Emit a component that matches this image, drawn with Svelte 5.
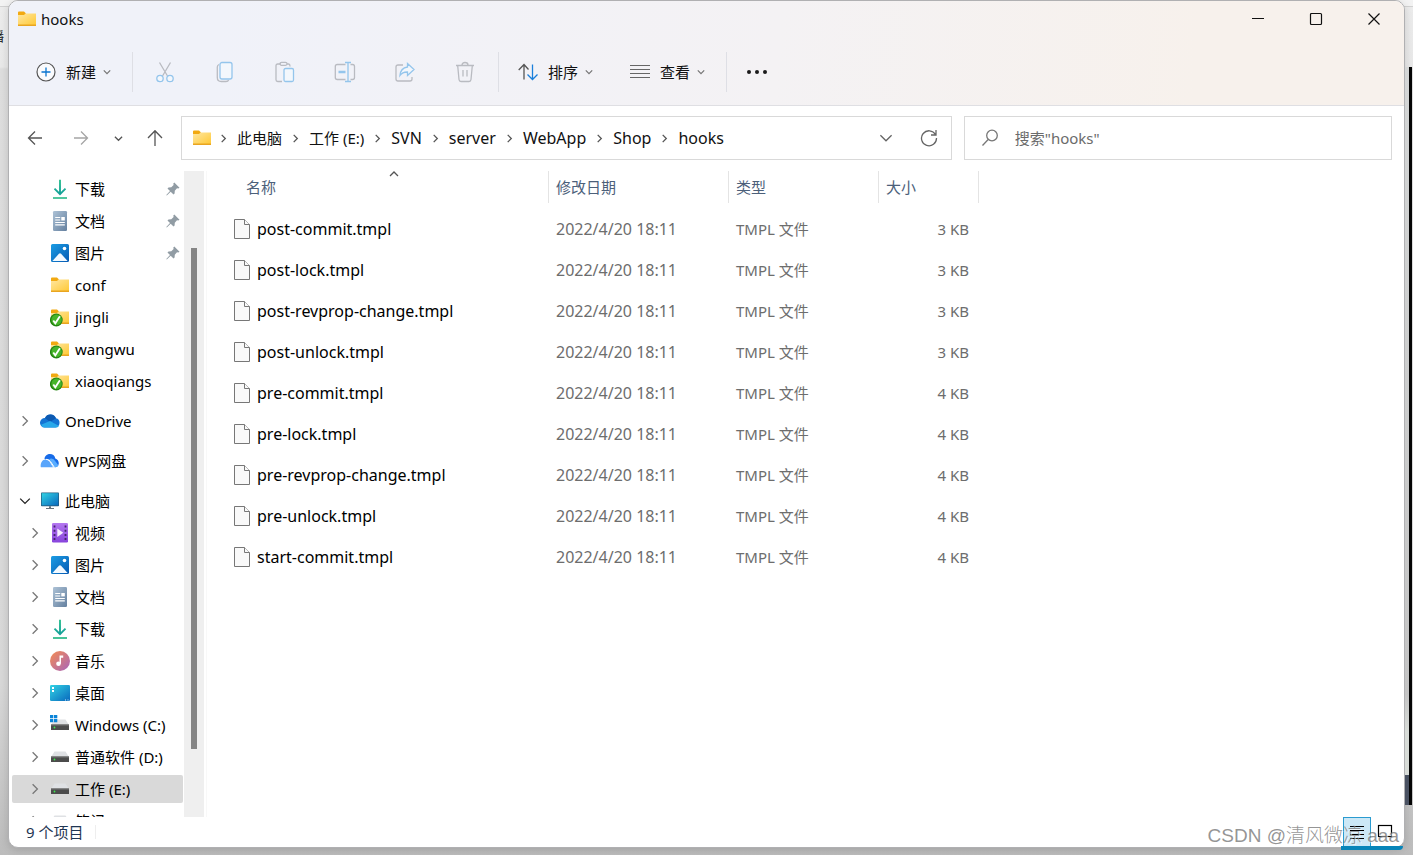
<script>
    const crumbs = [
        { text: "此电脑", cjk: true },
        { text: "工作 (E:)", cjk: true },
        { text: "SVN" },
        { text: "server" },
        { text: "WebApp" },
        { text: "Shop" },
        { text: "hooks" },
    ];

    const tools = [
        { name: "剪切", icon: "cut" },
        { name: "复制", icon: "copy" },
        { name: "粘贴", icon: "paste" },
        { name: "重命名", icon: "rename" },
        { name: "共享", icon: "share" },
        { name: "删除", icon: "trash" },
    ];

    const tree = [
        { text: "下载", icon: "download", level: 1, pin: true },
        { text: "文档", icon: "document", level: 1, pin: true },
        { text: "图片", icon: "picture", level: 1, pin: true },
        { text: "conf", icon: "folder", level: 1 },
        { text: "jingli", icon: "versioned", level: 1 },
        { text: "wangwu", icon: "versioned", level: 1 },
        { text: "xiaoqiangs", icon: "versioned", level: 1 },
        { text: "OneDrive", icon: "onedrive", level: 0, arrow: "right" },
        { text: "WPS网盘", icon: "wps", level: 0, arrow: "right" },
        { text: "此电脑", icon: "computer", level: 0, arrow: "down" },
        { text: "视频", icon: "video", level: 1, arrow: "right" },
        { text: "图片", icon: "picture", level: 1, arrow: "right" },
        { text: "文档", icon: "document", level: 1, arrow: "right" },
        { text: "下载", icon: "download", level: 1, arrow: "right" },
        { text: "音乐", icon: "music", level: 1, arrow: "right" },
        { text: "桌面", icon: "desktop", level: 1, arrow: "right" },
        { text: "Windows (C:)", icon: "system", level: 1, arrow: "right" },
        { text: "普通软件 (D:)", icon: "drive", level: 1, arrow: "right" },
        { text: "工作 (E:)", icon: "drive", level: 1, arrow: "right" },
        { text: "笔记 (F:)", icon: "drive", level: 1, arrow: "right" },
    ];

    const files = [
        { name: "post-commit.tmpl", size: 3 },
        { name: "post-lock.tmpl", size: 3 },
        { name: "post-revprop-change.tmpl", size: 3 },
        { name: "post-unlock.tmpl", size: 3 },
        { name: "pre-commit.tmpl", size: 4 },
        { name: "pre-lock.tmpl", size: 4 },
        { name: "pre-revprop-change.tmpl", size: 4 },
        { name: "pre-unlock.tmpl", size: 4 },
        { name: "start-commit.tmpl", size: 4 },
    ];

    let selected = $state(18);
    let search = $state("");
</script>

{#snippet chevron(dir, size = 8)}
    <svg class="chevron {dir}" width={size} height={size} viewBox="0 0 8 8">
        <path d="M0.8 2.4 4 5.6 7.2 2.4" />
    </svg>
{/snippet}

{#snippet folder()}
    <path d="M1 3.5q0-1 1-1h5l2 2-2 3H1z" fill="#f2a911" />
    <path d="M1 6h6l1.5-1.5H19V16H1z" fill="url(#gFolder)" />
    <path d="M1 15.5h18V17H1z" fill="#e9a520" />
{/snippet}

{#snippet icon(name)}
    <svg class="icon" width="20" height="20" viewBox="0 0 20 20">
        {#if name === "folder"}
            {@render folder()}
        {:else if name === "versioned"}
            {@render folder()}
            <circle cx="6.3" cy="13" r="6.4" fill="#248512" />
            <circle cx="6.6" cy="12.8" r="5.2" fill="#47b52a" />
            <path d="M3.3 13.5 5.3 16.3 9.9 9.3" fill="none" stroke="#fff" stroke-width="1.8" />
        {:else if name === "download"}
            <path d="M10 .8v14M4.5 9.7l5.5 5.5 5.5-5.5" fill="none" stroke="url(#gDown)" stroke-width="1.9" />
            <path d="M3 18.2h14v1.6H3z" fill="#19b37f" />
        {:else if name === "document"}
            <rect x="3" y="0" width="14" height="20" rx="1.3" fill="url(#gDoc)" />
            <path d="M5.2 6.5h5M5.2 9h5M5.2 11.5h9.6M5.2 13.8h9.6" stroke="#fff" stroke-width="1.2" />
            <path d="M11.3 6h3.5v3.4h-3.5z" fill="#fff" />
        {:else if name === "picture"}
            <rect x="1" y="1" width="18" height="18" rx="1.5" fill="url(#gPic)" />
            <path d="M2.4 18 8.9 10.8q1.100-1 2.200 0L17.6 18z" fill="#f2f9ff" />
            <circle cx="14.5" cy="5.5" r="1.8" fill="#fff" />
        {:else if name === "onedrive"}
            <path d="M5 7a6 6 0 0 1 11 .3A4.7 4.7 0 0 1 15.5 16.5H4.5A4.7 4.7 0 0 1 5 7z" fill="#1474d4" />
            <path d="M5 7a6 6 0 0 1 11 .3L10 11z" fill="#0c59b1" />
            <path d="M1 13.8 10 10l9 5q-1.4 1.7-3.5 1.5h-11Q2 16.500 1 13.800z" fill="#28a8ea" />
        {:else if name === "wps"}
            <path d="M4.5 8C5 1.500 14.500 1.500 15.300 7.500 19.500 8.500 20.300 15.500 15.500 16.300L9 9z" fill="#176be8" />
            <path d="M9 8q4-2 6.500 2.500l3 4q-1 1.800-3 1.800H13.500z" fill="#59adff" />
            <path d="M.7 16C0 10 5 5.700 9.500 10.500L13 16.300H1z" fill="#59a5fb" />
            <path d="M6 8.300q3-.2 4.700 2.500l3.600 5.500" stroke="#fff" fill="none" />
        {:else if name === "computer"}
            <rect x="1" y="1.500" width="18" height="13.800" rx=".8" fill="#235a7d" />
            <path d="M1.700 2.200h16.600v12.200H1.700z" fill="url(#gScreen)" />
            <path d="M9 15.300h2v1.800H9zM6 17h8v1H6z" fill="#66727b" />
        {:else if name === "video"}
            <rect x="2" y="0" width="16" height="19.500" rx="1.300" fill="url(#gVideo)" />
            <path d="M4.500 2.500v16M15.500 2.500v16" stroke="#43236e" stroke-width="1.800" stroke-dasharray="2 2.200" />
            <path d="M7.300 5.500v8.500l6-4.200z" fill="#f6eeff" />
        {:else if name === "music"}
            <circle cx="10" cy="10" r="10" fill="url(#gMusic)" />
            <circle cx="8.500" cy="12.700" r="2.300" fill="#fff" />
            <path d="M9.500 4.500h3.700v2.200H11v6H9.500z" fill="#fff" />
        {:else if name === "desktop"}
            <rect x="0" y="2" width="20" height="16" rx="1.300" fill="url(#gScreen)" />
            <path d="M2 4h2v2H2zM2 7h2v2H2z" fill="#fff" />
            <path d="M15 17h1M17.500 17h1" stroke="#d5f2ff" />
        {:else}
            <path d="M4.500 4.500h11L19 10H1z" fill="#dfe1e4" />
            <path d="M1 9.500h18V15H1z" fill="#4c4c4c" />
            <path d="M1 9.500h18v1H1z" fill="#777" />
            <circle cx="4.500" cy="12.500" r=".9" fill="#3bea4d" />
            {#if name === "system"}
                <path d="M0 0h3.300v3.300H0zM4 0h3.300v3.300H4zM0 4h3.300v3.300H0zM4 4h3.300v3.300H4z" fill="#0a84d8" />
            {/if}
        {/if}
    </svg>
{/snippet}

{#snippet toolIcon(name)}
    <svg class="tool" width="22" height="22" viewBox="0 0 22 22">
        {#if name === "cut"}
            <path class="gray" d="M5.500 1.500 13.500 15M16.500 1.500 8.500 15" />
            <circle class="blue" cx="6" cy="17.500" r="3.200" />
            <circle class="blue" cx="16" cy="17.500" r="3.200" />
        {:else if name === "copy"}
            <path class="gray" d="M5 3.500Q3.300 4.200 3.300 6v10.500q0 4 4 4H12q2 0 2.700-1.500" />
            <rect class="blue" x="6" y="1.500" width="12" height="16.500" rx="2" />
        {:else if name === "paste"}
            <path class="gray" d="M7 3H3.700Q2 3 2 4.700v14Q2 20.500 3.700 20.500H8M13 3h1.500Q16 3 16 5v.500" />
            <rect class="gray" x="6" y="1.300" width="7" height="3" rx="1.500" />
            <rect class="blue" x="10" y="7.500" width="9.500" height="13" rx="1.500" />
        {:else if name === "rename"}
            <path class="gray" d="M11.500 3.500H3.300q-2 0-2 2v11q0 2 2 2h8.200M16.500 3.500h2q2 0 2 2v11q0 2-2 2h-2" />
            <path class="blue" d="M11 1.500h6M11 20.500h6M14 1.500v19" />
            <path class="blue thick" d="M4.500 11h7" />
        {:else if name === "share"}
            <path class="gray" d="M9 4H4Q2 4 2 6v12q0 2 2 2h12q2 0 2-2v-2" />
            <path class="blue" d="M13.500 2.500 20 8.500l-6.500 6V11q-5-.200-7.500 3.500Q6.500 7 13.500 6z" />
        {:else if name === "trash"}
            <path class="gray" d="M2 4.500h18M8 4q0-2.500 3-2.500T14 4M3.700 4.700 5 18.500q.2 2 2 2h8q1.800 0 2-2L18.300 4.700M9 9v6.500M13 9v6.500" />
        {/if}
    </svg>
{/snippet}

<svg class="defs" width="0" height="0" aria-hidden="true">
    <defs>
        <linearGradient id="gFolder" x1="0" y1="0" x2="1" y2="1">
            <stop offset="0" stop-color="#ffe7a2" />
            <stop offset="1" stop-color="#ffc936" />
        </linearGradient>
        <linearGradient id="gDown" gradientUnits="userSpaceOnUse" x1="0" y1="0" x2="0" y2="16">
            <stop offset="0" stop-color="#2fc28e" />
            <stop offset="1" stop-color="#129d9a" />
        </linearGradient>
        <linearGradient id="gDoc" x1="0" y1="0" x2="1" y2="1">
            <stop offset="0" stop-color="#adc2d6" />
            <stop offset="1" stop-color="#64809f" />
        </linearGradient>
        <linearGradient id="gPic" x1="0" y1="0" x2="1" y2="1">
            <stop offset="0" stop-color="#1b9de4" />
            <stop offset="1" stop-color="#0659b2" />
        </linearGradient>
        <linearGradient id="gScreen" x1="0" y1="0" x2="1" y2="1">
            <stop offset="0" stop-color="#32d3e4" />
            <stop offset="1" stop-color="#0968bd" />
        </linearGradient>
        <linearGradient id="gVideo" x1="0" y1="0" x2="0" y2="1">
            <stop offset="0" stop-color="#b477f0" />
            <stop offset="1" stop-color="#8744dc" />
        </linearGradient>
        <linearGradient id="gMusic" x1="0" y1="0" x2="1" y2="1">
            <stop offset="0" stop-color="#f58c52" />
            <stop offset="1" stop-color="#a765bb" />
        </linearGradient>
    </defs>
</svg>

<div class="screen">
    <div class="behind left"><span>播</span></div>
    <div class="window">
        <header>
            <div class="titlebar">
                {@render icon("folder")}
                <h1>hooks</h1>
                <button type="button" aria-label="最小化">
                    <svg width="14" height="14" viewBox="0 0 14 14"><path d="M1 6.500h12" /></svg>
                </button>
                <button type="button" aria-label="最大化">
                    <svg width="14" height="14" viewBox="0 0 14 14"><rect x="1.500" y="1.500" width="11" height="11" rx="1" /></svg>
                </button>
                <button type="button" aria-label="关闭">
                    <svg width="14" height="14" viewBox="0 0 14 14"><path d="M1.500 1.500l11 11M12.500 1.500l-11 11" /></svg>
                </button>
            </div>
            <div class="toolbar">
                <button type="button" class="command">
                    <svg width="20" height="20" viewBox="0 0 20 20">
                        <circle cx="10" cy="10" r="9" fill="#fafbfd" stroke="#555" stroke-width="1.200" />
                        <path d="M10 5.500v9M5.500 10h9" stroke="#0a74cf" stroke-width="1.300" />
                    </svg>
                    <span>新建</span>
                    {@render chevron("down")}
                </button>
                <i></i>
                <div class="tools">
                    {#each tools as tool}
                        <button type="button" aria-label={tool.name} disabled>
                            {@render toolIcon(tool.icon)}
                        </button>
                    {/each}
                </div>
                <i></i>
                <button type="button" class="command">
                    <svg width="20" height="20" viewBox="0 0 20 20" fill="none" stroke-width="1.300">
                        <path d="M6 17.500V2.500M.7 8 6 2.500 10.500 7.500" stroke="#555" />
                        <path d="M14.500 2.500v15M9.500 12.500l5 5 5-5" stroke="#1a7fdb" />
                    </svg>
                    <span>排序</span>
                    {@render chevron("down")}
                </button>
                <button type="button" class="command view">
                    <svg width="20" height="20" viewBox="0 0 20 20" stroke="#666" stroke-width="1.200">
                        <path d="M0 3.500h20M0 7.500h20M0 11.500h20M0 15.500h20" />
                    </svg>
                    <span>查看</span>
                    {@render chevron("down")}
                </button>
                <i></i>
                <button type="button" class="command" aria-label="更多">
                    <svg width="22" height="20" viewBox="0 0 22 20" fill="#1a1a1a">
                        <circle cx="3" cy="10" r="2" /><circle cx="11" cy="10" r="2" /><circle cx="19" cy="10" r="2" />
                    </svg>
                </button>
            </div>
        </header>

        <nav class="navigation">
            <div class="history">
                <button type="button" aria-label="后退">
                    <svg width="16" height="16" viewBox="0 0 16 16"><path d="M15 8H1.500M8 1.500 1.500 8 8 14.500" /></svg>
                </button>
                <button type="button" class="dim" aria-label="前进">
                    <svg width="16" height="16" viewBox="0 0 16 16"><path d="M1 8h13.500M8 1.500 14.500 8 8 14.500" /></svg>
                </button>
                <button type="button" class="recent" aria-label="最近浏览的位置">{@render chevron("down", 9)}</button>
                <button type="button" aria-label="上移">
                    <svg width="16" height="18" viewBox="0 0 16 18"><path d="M8 17V2M1 9l7-7.300L15 9" /></svg>
                </button>
            </div>
            <div class="fields">
                <div class="address">
                    {@render icon("folder")}
                    <ol>
                        {#each crumbs as crumb}
                            <li>
                                {@render chevron("right", 9)}
                                <a href="#/" class:cjk={crumb.cjk}>{crumb.text}</a>
                            </li>
                        {/each}
                    </ol>
                    <button type="button" aria-label="以前的位置">{@render chevron("down", 14)}</button>
                    <button type="button" aria-label="刷新">
                        <svg width="18" height="18" viewBox="0 0 18 18"><path d="M15.500 5.500A7.500 7.500 0 1 0 16.500 9M16 1v5h-5" /></svg>
                    </button>
                </div>
                <div class="search">
                    <svg width="18" height="18" viewBox="0 0 18 18"><circle cx="11" cy="6.500" r="5.300" /><path d="M7.200 10.500 1.500 16.500" /></svg>
                    <input type="text" aria-label="搜索" placeholder={'搜索"hooks"'} bind:value={search} />
                </div>
            </div>
        </nav>

        <div class="content">
            <aside>
                <ul>
                    {#each tree as item, i}
                        <li class:root={item.level === 0}>
                            <button
                                type="button"
                                class="level{item.level}"
                                class:selected={selected === i}
                                onclick={() => (selected = i)}
                            >
                                <span class="arrow {item.arrow}">
                                    {#if item.arrow}{@render chevron(item.arrow, 12)}{/if}
                                </span>
                                {@render icon(item.icon)}
                                <span class="label">{item.text}</span>
                                {#if item.pin}
                                    <svg class="pin" width="14" height="14" viewBox="0 0 14 14">
                                        <path d="M8.300.5 13.500 5.700 12.300 6.500 11 6.300 8.800 8.700 8.600 11.600 7.500 12.500 4.700 9.700.8 13.500.3 13 4 9 1.500 6.500 2.500 5.400 5.300 5.200 7.600 3 7.300 1.500z" />
                                    </svg>
                                {/if}
                            </button>
                        </li>
                    {/each}
                </ul>
                <div class="scrollbar"><span></span></div>
            </aside>
            <main>
                <table>
                    <colgroup>
                        <col class="name" />
                        <col class="date" />
                        <col class="type" />
                        <col class="size" />
                    </colgroup>
                    <thead>
                        <tr>
                            <th class="first">
                                <button type="button">名称 {@render chevron("up", 10)}</button>
                            </th>
                            <th><button type="button">修改日期</button></th>
                            <th><button type="button">类型</button></th>
                            <th><button type="button">大小</button></th>
                        </tr>
                    </thead>
                    <tbody>
                        {#each files as file}
                            <tr>
                                <td class="file">
                                    <svg width="16" height="20" viewBox="0 0 16 20">
                                        <path d="M.5.500h10l5 5v14H.500z" /><path d="M10.500.500v5h5" />
                                    </svg>
                                    <span>{file.name}</span>
                                </td>
                                <td class="latin">2022/4/20 18:11</td>
                                <td>TMPL 文件</td>
                                <td class="amount">{file.size} KB</td>
                            </tr>
                        {/each}
                    </tbody>
                </table>
            </main>
        </div>

        <footer>
            <span>9 个项目</span>
            <i></i>
            <button type="button" class="active" aria-label="详细信息">
                <svg width="16" height="16" viewBox="0 0 16 16"><path d="M1 2.500h14M1 6.500h14M1 10.500h14M1 14.500h14" /></svg>
            </button>
            <button type="button" aria-label="大缩略图">
                <svg width="16" height="16" viewBox="0 0 16 16"><rect x="1.500" y="1.500" width="13" height="11" /></svg>
            </button>
        </footer>
    </div>
    <div class="behind right"><span></span></div>
    <div class="taskbar"></div>
    <div class="watermark">CSDN @清风微凉 aaa</div>
</div>

<style>
    :global(body) {
        margin: 0;
    }
    .screen {
        position: relative;
        display: flex;
        box-sizing: border-box;
        height: 100vh;
        padding-bottom: 7px;
        overflow: hidden;
        background: linear-gradient(
            #f3f3f3 6px,
            #d2d2d2 6px,
            #d2d2d2 7px,
            #ececec 7px,
            #e9e9e9 67px,
            #dedede 69px,
            #d8d8d8 80%,
            #bcbcbc
        );
        font-family: "Noto Sans", "Noto Sans CJK SC", sans-serif;
        font-size: 15px;
        line-height: 20px;
        color: #111;
    }
    .defs {
        position: absolute;
    }
    .behind {
        flex: none;
        width: 8px;
        overflow: hidden;
    }
    .left {
        display: flex;
        justify-content: flex-end;
        box-sizing: border-box;
        padding: 26px 4px 0 0;
        font-size: 13px;
    }
    .right span {
        display: block;
        box-sizing: border-box;
        height: 87%;
        margin-top: 67px;
        border-right: 3px solid #050505;
        margin-right: 1px;
        background: linear-gradient(#d4d6d6, #c4c4c4 85%, #d8dcd8 90%, #d8dcd8 96%, #4a5262 96%);
    }
    .window {
        flex: 1;
        min-width: 0;
        display: flex;
        flex-direction: column;
        border: 1px solid #b0b0b2;
        border-radius: 10px;
        background: white;
        overflow: hidden;
        box-shadow: 0 2px 8px rgba(0, 0, 0, 0.15);
    }
    button {
        display: flex;
        align-items: center;
        padding: 0;
        border: 0;
        background: none;
        font: inherit;
        color: inherit;
    }
    svg {
        flex: none;
        display: block;
    }
    .chevron path {
        fill: none;
        stroke: currentColor;
        stroke-width: 1.3;
        vector-effect: non-scaling-stroke;
    }
    .chevron.right {
        transform: rotate(-90deg);
    }
    .chevron.up {
        transform: rotate(180deg);
    }

    header {
        border-bottom: 1px solid #dfdfe3;
        background: linear-gradient(95deg, #f0f2f9 15%, #f4f2f4 55%, #f7f1ec 85%);
    }
    .titlebar {
        display: flex;
        height: 36px;
        align-items: center;
        padding: 0 1px 0 8px;
    }
    .titlebar h1 {
        flex: 1;
        margin: 0 0 0 4px;
        font-size: 15px;
        line-height: 20px;
        font-weight: normal;
    }
    .titlebar button {
        width: 58px;
        height: 36px;
        justify-content: center;
    }
    .titlebar button svg {
        fill: none;
        stroke: #111;
        stroke-width: 1.2;
    }
    .toolbar {
        display: flex;
        align-items: center;
        height: 66px;
        padding: 2px 0 0 27px;
    }
    .toolbar i {
        height: 40px;
        border-left: 1px solid #dedfe5;
        margin: 0 19px 0 21px;
    }
    .tools {
        display: flex;
        margin: 0 -18px 0 -17px;
    }
    .tools button {
        width: 60px;
        height: 40px;
        justify-content: center;
    }
    .tool path,
    .tool rect,
    .tool circle {
        fill: none;
        stroke-width: 1.3;
    }
    .tool .gray {
        stroke: #b9bbc1;
    }
    .tool .blue {
        stroke: #94c5ec;
        fill: #f3f7fc;
    }
    .tool .thick {
        stroke-width: 2.5;
    }
    .command span {
        margin: 0 7px 0 10px;
    }
    .command .chevron,
    .command :global(.chevron) {
        color: #777;
    }
    .view {
        margin-left: 37px;
    }

    .navigation {
        display: flex;
        padding: 10px 12px 11px 0;
    }
    .history {
        display: flex;
        box-sizing: border-box;
        padding-left: 3px;
        width: 172px;
    }
    .history button {
        width: 46px;
        justify-content: center;
        color: #555;
    }
    .history .recent {
        width: 28px;
    }
    .history .dim {
        color: #a5a5a5;
    }
    .history svg,
    .address button svg,
    .search svg {
        fill: none;
        stroke: currentColor;
        stroke-width: 1.3;
    }
    .fields {
        flex: 1;
        display: grid;
        grid-template-columns: 9fr 5fr;
        gap: 12px;
    }
    .address,
    .search {
        display: flex;
        align-items: center;
        box-sizing: border-box;
        height: 44px;
        border: 1px solid #d9d9d9;
        background: white;
    }
    .address {
        padding-left: 10px;
    }
    .address ol {
        flex: 1;
        display: flex;
        margin: 0 0 0 7px;
        padding: 0;
        list-style: none;
    }
    .address li {
        display: flex;
        align-items: center;
        gap: 9px;
        margin-right: 9px;
        color: #555;
    }
    .address a {
        font-size: 16px;
        color: #111;
        text-decoration: none;
    }
    .address a.cjk {
        font-size: 15px;
    }
    .address button {
        width: 43px;
        justify-content: center;
        color: #666;
    }
    .search {
        color: #777;
        padding-left: 16px;
    }
    .search input {
        flex: 1;
        min-width: 0;
        margin-left: 16px;
        padding: 0;
        border: 0;
        outline: none;
        background: none;
        font: inherit;
        color: #111;
    }
    .search input::placeholder {
        color: #6b6b6b;
        opacity: 1;
    }

    .content {
        flex: 1;
        min-height: 0;
        display: flex;
    }
    aside {
        display: flex;
        width: 195px;
    }
    aside ul {
        flex: 1;
        margin: 0;
        padding: 2px 0 0;
        overflow: hidden;
        list-style: none;
    }
    aside li {
        padding: 2px 1px 2px 3px;
    }
    aside li.root {
        margin-top: 8px;
    }
    aside button {
        width: 100%;
        height: 28px;
        border-radius: 2px;
        color: #000;
    }
    .level0 {
        padding-left: 7px;
    }
    .level1 {
        padding-left: 17px;
    }
    .selected {
        background: #d9d9d9;
    }
    .arrow {
        width: 12px;
        margin-right: 9px;
        color: #777;
    }
    .arrow.down {
        color: #222;
    }
    .label {
        flex: 1;
        margin-left: 5px;
        text-align: left;
        white-space: nowrap;
    }
    .pin {
        margin-right: 3px;
        fill: #919ca4;
    }
    .scrollbar {
        display: flex;
        flex-direction: column;
        align-items: center;
        width: 20px;
        background: #efefef;
    }
    .scrollbar::before {
        content: "";
        flex: 77;
    }
    .scrollbar span {
        flex: 501;
        width: 6px;
        background: #858585;
    }
    .scrollbar::after {
        content: "";
        flex: 68;
    }

    main {
        flex: 1;
        margin-left: 2px;
        border-left: 1px solid #f8f8f8;
        padding-left: 19px;
        overflow: hidden;
    }
    table {
        table-layout: fixed;
        width: 753px;
        border-collapse: separate;
        border-spacing: 0;
        color: #6d6d6d;
    }
    col.name {
        width: 323px;
    }
    col.date {
        width: 180px;
    }
    col.type {
        width: 150px;
    }
    col.size {
        width: 100px;
    }
    th {
        height: 32px;
        padding: 0;
        border-right: 1px solid #e4e4e4;
        font-weight: normal;
        color: #4c607a;
    }
    th.first {
        padding-left: 13px;
    }
    th button {
        position: relative;
        width: 100%;
        height: 32px;
        padding-left: 7px;
    }
    th :global(.chevron) {
        position: absolute;
        left: 50%;
        top: -2px;
        margin-left: -5px;
        color: #555;
    }
    tbody::before {
        content: "";
        display: block;
        height: 5px;
    }
    td {
        height: 41px;
        padding: 0 0 0 7px;
    }
    td.latin {
        font-size: 16px;
    }
    td.file {
        display: flex;
        align-items: center;
        padding-left: 8px;
        font-size: 16px;
        color: #000;
    }
    td.file svg {
        margin-right: 7px;
        fill: #f9f9f9;
        stroke: #777;
    }
    td.amount {
        padding-right: 10px;
        text-align: right;
    }

    footer {
        display: flex;
        align-items: center;
        height: 30px;
        padding: 0 5px 0 17px;
        color: #1f3653;
    }
    footer i {
        height: 14px;
        margin: 0 auto 0 12px;
        border-left: 1px solid #eee;
    }
    footer button {
        box-sizing: border-box;
        width: 28px;
        height: 30px;
        justify-content: center;
        border: 1px solid transparent;
    }
    footer button.active {
        border-color: #2a9bd0;
        background: #cce8f6;
    }
    footer svg {
        fill: none;
        stroke: #000;
        stroke-width: 1.2;
    }
    .taskbar {
        position: absolute;
        right: 10px;
        bottom: 5px;
        width: 62px;
        height: 4px;
        border-radius: 0 0 8px 0;
        background: #0785b9;
    }
    .watermark {
        position: absolute;
        right: 14px;
        bottom: 5px;
        font-family: "Liberation Sans", "Noto Sans CJK SC", sans-serif;
        font-size: 19px;
        font-weight: 300;
        line-height: 28px;
        color: rgba(130, 130, 130, 0.85);
        text-shadow: 1px 1px 0 rgba(255, 255, 255, 0.7);
        pointer-events: none;
    }
</style>
